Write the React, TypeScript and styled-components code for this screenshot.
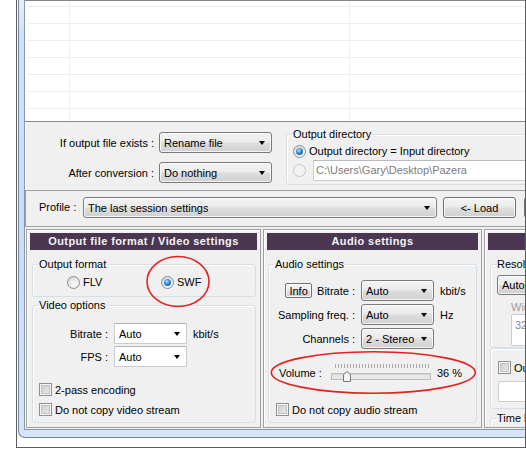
import React from 'react';
import styled, { createGlobalStyle } from 'styled-components';

const GlobalStyle = createGlobalStyle`
    html, body { margin: 0; padding: 0; background: #fff; }
    body {
        font-family: "Liberation Sans", Tahoma, Arial, sans-serif;
        font-size: 11px;
        color: #000;
    }
    * { box-sizing: border-box; }
`;

/* Data */
const listRows = [6, 17, 17, 17, 17, 17, 17, 12];

export default function App() {
    return (
        <Page>
            <GlobalStyle />
            <Frame>
                <Window>
                    <Client>
                        <List>
                            {listRows.map((h, i) => (
                                <ListRow key={i} $h={h} $last={i === listRows.length - 1}>
                                    <Cell />
                                    <Cell />
                                    <Cell />
                                </ListRow>
                            ))}
                        </List>

                        <OptionsArea>
                            <OptionsGrid>
                                <RightLabel>If output file exists :</RightLabel>
                                <Drop>
                                    <DropText>Rename file</DropText>
                                    <Arrow />
                                </Drop>
                                <RightLabel>After conversion :</RightLabel>
                                <Drop>
                                    <DropText>Do nothing</DropText>
                                    <Arrow />
                                </Drop>
                            </OptionsGrid>

                            <DirGroup>
                                <Legend>Output directory</Legend>
                                <DirRow>
                                    <RadioMark $checked />
                                    <span>Output directory = Input directory</span>
                                </DirRow>
                                <DirRow>
                                    <RadioMark $disabled />
                                    <PathInput>C:\Users\Gary\Desktop\Pazera</PathInput>
                                </DirRow>
                            </DirGroup>
                        </OptionsArea>

                        <ProfileBar>
                            <ProfileLabel>Profile :</ProfileLabel>
                            <Drop $w={354}>
                                <DropText>The last session settings</DropText>
                                <Arrow />
                            </Drop>
                            <Button $w={73}>&lt;- Load</Button>
                            <Button $w={73} />
                        </ProfileBar>

                        <PanelsRow>
                            <Panel $w={235}>
                                <PanelHeader>Output file format / Video settings</PanelHeader>
                                <Group $mt={8} $ml={2} $pad="4px 6px 7px">
                                    <Legend>Output format</Legend>
                                    <FormatRow>
                                        <Choice>
                                            <RadioMark />
                                            <span>FLV</span>
                                        </Choice>
                                        <Choice>
                                            <RadioMark $checked />
                                            <span>SWF</span>
                                        </Choice>
                                    </FormatRow>
                                </Group>
                                <Group $mt={2} $ml={2} $pad="11px 6px 6px">
                                    <Legend>Video options</Legend>
                                    <FieldGrid $label={69} $gap={6}>
                                        <RightLabel>Bitrate :</RightLabel>
                                        <Drop $w={73} $edit>
                                            <DropText>Auto</DropText>
                                            <Arrow />
                                        </Drop>
                                        <Unit>kbit/s</Unit>
                                        <RightLabel>FPS :</RightLabel>
                                        <Drop $w={73} $edit>
                                            <DropText>Auto</DropText>
                                            <Arrow />
                                        </Drop>
                                        <span />
                                    </FieldGrid>
                                    <CheckList $mt={16}>
                                        <Choice>
                                            <CheckMark />
                                            <span>2-pass encoding</span>
                                        </Choice>
                                        <Choice>
                                            <CheckMark />
                                            <span>Do not copy video stream</span>
                                        </Choice>
                                    </CheckList>
                                </Group>
                            </Panel>

                            <Panel $w={219}>
                                <PanelHeader>Audio settings</PanelHeader>
                                <Group $mt={8} $ml={1} $pad="9px 6px 6px">
                                    <Legend>Audio settings</Legend>
                                    <FieldGrid $label={80} $gap={6} $rowGap={3}>
                                        <LabelCell>
                                            <SmallButton>Info</SmallButton>
                                            <span>Bitrate :</span>
                                        </LabelCell>
                                        <Drop $w={73}>
                                            <DropText>Auto</DropText>
                                            <Arrow />
                                        </Drop>
                                        <Unit>kbit/s</Unit>
                                        <RightLabel>Sampling freq. :</RightLabel>
                                        <Drop $w={73}>
                                            <DropText>Auto</DropText>
                                            <Arrow />
                                        </Drop>
                                        <Unit>Hz</Unit>
                                        <RightLabel>Channels :</RightLabel>
                                        <Drop $w={73}>
                                            <DropText>2 - Stereo</DropText>
                                            <Arrow />
                                        </Drop>
                                        <span />
                                    </FieldGrid>
                                    <VolumeRow>
                                        <VolumeLabel>Volume :</VolumeLabel>
                                        <Slider>
                                            <Ticks />
                                            <Track />
                                            <Thumb style={{ left: 12 }} viewBox="0 0 8 11" width="8" height="11">
                                                <path
                                                    d="M0.5 3.5 L4 0.5 L7.5 3.5 L7.5 10.5 L0.5 10.5 Z"
                                                    fill="#ececec"
                                                    stroke="#7a7a7a"
                                                />
                                                <path d="M1.5 4 L4 1.8 L6.5 4 L6.5 9.5 L1.5 9.5 Z" fill="#f8f8f8" />
                                            </Thumb>
                                        </Slider>
                                        <VolumeValue>36 %</VolumeValue>
                                    </VolumeRow>
                                    <CheckList $mt={17} $ml={1}>
                                        <Choice>
                                            <CheckMark />
                                            <span>Do not copy audio stream</span>
                                        </Choice>
                                    </CheckList>
                                </Group>
                            </Panel>

                            <Panel $w={200}>
                                <PanelHeader />
                                <Group $mt={8} $ml={2} $pad="4px 6px 1px">
                                    <Legend>Resolution</Legend>
                                    <Drop $w={80} $h={20}>
                                        <DropText>Auto</DropText>
                                        <Arrow />
                                    </Drop>
                                    <SubField>
                                        <Disabled>Width</Disabled>
                                        <SizeInput>320</SizeInput>
                                    </SubField>
                                </Group>
                                <Group $mt={0} $ml={2} $pad="12px 7px 6px">
                                    <Choice>
                                        <CheckMark />
                                        <span>Output</span>
                                    </Choice>
                                    <BlankInput />
                                </Group>
                                <Group $mt={3} $ml={2} $pad="4px 6px 6px">
                                    <Legend>Time limit</Legend>
                                </Group>
                            </Panel>
                        </PanelsRow>
                    </Client>
                </Window>
            </Frame>

            <Marks viewBox="0 0 526 451" width="526" height="451">
                <ellipse cx="178" cy="281.5" rx="31" ry="25" fill="none" stroke="#e3231f" strokeWidth="1.6" />
                <ellipse cx="373.3" cy="372.5" rx="102" ry="20.7" fill="none" stroke="#e3231f" strokeWidth="1.6" />
            </Marks>
        </Page>
    );
}

/* Styles */
const Page = styled.div`
    position: relative;
    width: 526px;
    height: 451px;
    overflow: hidden;
    padding-left: 16px;
    background: #fff;
`;
const Frame = styled.div`
    width: 510px;
    height: 448px;
    border: 1px solid #5d5d5d;
    border-top: none;
    overflow: hidden;
    padding-left: 1px;
`;
const Window = styled.div`
    width: 640px;
    height: 438px;
    border-left: 1px solid #72849b;
    border-bottom: 1px solid #72849b;
    border-bottom-left-radius: 7px;
    background: linear-gradient(to bottom, #e6eefa 0, #cfe1f7 8%, #c9dcf4 60%, #d6e5f8 100%);
    padding: 0 0 7px 5px;
`;
const Client = styled.div`
    height: 100%;
    border-left: 1px solid #8896a8;
    border-bottom: 1px solid #8896a8;
    background: #f0f0f0;
    box-shadow: inset 1px 0 0 #fff;
    display: flex;
    flex-direction: column;
`;
const List = styled.div`
    flex: none;
    height: 122px;
    background: #fff;
    border-top: 1px solid #828790;
    border-bottom: 1px solid #828790;
    padding-left: 2px;
    overflow: hidden;
`;
const ListRow = styled.div<{ $h: number; $last?: boolean }>`
    display: grid;
    grid-template-columns: 43px 280px 1fr;
    height: ${(p) => p.$h}px;
    border-bottom: ${(p) => (p.$last ? 'none' : '1px solid #efefef')};
`;
const Cell = styled.div`
    border-right: 1px solid #efefef;
`;

const OptionsArea = styled.div`
    flex: none;
    height: 68px;
    display: flex;
    align-items: flex-start;
    padding-left: 1px;
`;
const OptionsGrid = styled.div`
    display: grid;
    grid-template-columns: 128px 113px;
    grid-auto-rows: 21px;
    column-gap: 5px;
    row-gap: 9px;
    padding-top: 10px;
    align-items: center;
`;
const RightLabel = styled.span`
    text-align: right;
    white-space: nowrap;
`;
const Legend = styled.legend`
    padding: 0 1px;
    margin-left: -1px;
    line-height: 13px;
    font-size: 11px;
    white-space: nowrap;
`;
const DirGroup = styled.fieldset`
    margin: 6px 0 0 14px;
    width: 300px;
    min-width: 0;
    border: 1px solid #d5dfe5;
    border-radius: 3px;
    box-shadow: inset 1px 1px 0 #fff;
    padding: 2px 6px 3px;
    display: flex;
    flex-direction: column;
    gap: 1px;
`;
const DirRow = styled.div`
    display: flex;
    align-items: center;
    gap: 3px;
    min-height: 16px;
    &:last-child {
        gap: 7px;
        height: 21px;
    }
`;
const PathInput = styled.div`
    width: 240px;
    height: 21px;
    line-height: 19px;
    border: 1px solid #c8cdd3;
    border-top-color: #b7bcc2;
    background: #fff;
    color: #7c7c7c;
    padding-left: 2px;
    white-space: nowrap;
`;

const Drop = styled.div<{ $w?: number; $h?: number; $edit?: boolean }>`
    width: ${(p) => p.$w ?? 113}px;
    height: ${(p) => p.$h ?? 21}px;
    flex: none;
    display: flex;
    align-items: center;
    justify-content: space-between;
    padding: 0 6px 0 4px;
    border: 1px solid ${(p) => (p.$edit ? '#c9ccd2' : '#7a7a7a')};
    border-top-color: ${(p) => (p.$edit ? '#aeb1b8' : '#7a7a7a')};
    border-radius: ${(p) => (p.$edit ? '1px' : '3px')};
    background: ${(p) =>
        p.$edit
            ? '#fff'
            : 'linear-gradient(to bottom, #f3f3f3 0%, #ebebeb 48%, #dddddd 52%, #d0d0d0 100%)'};
    box-shadow: ${(p) => (p.$edit ? 'none' : 'inset 0 0 0 1px rgba(255,255,255,0.75)')};
`;
const DropText = styled.span`
    white-space: nowrap;
    overflow: hidden;
`;
const Arrow = styled.span`
    flex: none;
    width: 0;
    height: 0;
    border-left: 3.5px solid transparent;
    border-right: 3.5px solid transparent;
    border-top: 4px solid #000;
    margin-top: 1px;
`;
const Button = styled.div<{ $w: number }>`
    width: ${(p) => p.$w}px;
    height: 21px;
    flex: none;
    display: flex;
    align-items: center;
    justify-content: center;
    border: 1px solid #707070;
    border-radius: 3px;
    background: linear-gradient(to bottom, #f3f3f3 0%, #ebebeb 48%, #dddddd 52%, #d0d0d0 100%);
    box-shadow: inset 0 0 0 1px rgba(255, 255, 255, 0.75);
    white-space: nowrap;
`;
const SmallButton = styled.div`
    width: 27px;
    height: 15px;
    display: flex;
    align-items: center;
    justify-content: center;
    border: 1px solid #707070;
    border-radius: 2px;
    background: linear-gradient(to bottom, #f3f3f3 0%, #ebebeb 48%, #dddddd 52%, #d0d0d0 100%);
    box-shadow: inset 0 0 0 1px rgba(255, 255, 255, 0.75);
`;

const ProfileBar = styled.div`
    flex: none;
    height: 37px;
    border-top: 1px solid #a0a0a0;
    border-bottom: 1px solid #a0a0a0;
    border-left: 1px solid #a0a0a0;
    display: flex;
    align-items: flex-start;
    padding: 6px 0 0 13px;
    & > ${Button} {
        margin-left: 6px;
    }
    & > ${Button}:last-child {
        margin-left: 8px;
    }
`;
const ProfileLabel = styled.span`
    width: 44px;
    line-height: 21px;
`;

const PanelsRow = styled.div`
    flex: none;
    display: flex;
    gap: 2px;
    margin-top: 2px;
    padding-left: 1px;
    height: 199px;
`;
const Panel = styled.section<{ $w: number }>`
    width: ${(p) => p.$w}px;
    flex: none;
    height: 100%;
    border: 1px solid #a0a0a0;
    box-shadow: inset 1px 1px 0 #fff;
    padding: 3px;
    display: flex;
    flex-direction: column;
    overflow: hidden;
`;
const PanelHeader = styled.h2`
    margin: 0;
    height: 17px;
    flex: none;
    background: #4a3650;
    color: #f3f3f3;
    font-size: 11px;
    font-weight: bold;
    letter-spacing: 0.4px;
    line-height: 17px;
    text-align: center;
    white-space: nowrap;
`;
const Group = styled.fieldset<{ $mt: number; $ml: number; $pad: string }>`
    margin: ${(p) => p.$mt}px 1px 0 ${(p) => p.$ml}px;
    min-width: 0;
    flex: none;
    border: 1px solid #d5dfe5;
    border-radius: 3px;
    box-shadow: inset 1px 1px 0 #fff;
    padding: ${(p) => p.$pad};
`;
const FormatRow = styled.div`
    display: grid;
    grid-template-columns: 94px auto;
    padding-left: 28px;
    height: 14px;
    align-items: center;
`;
const Choice = styled.label`
    display: flex;
    align-items: center;
    gap: 3px;
    height: 13px;
    white-space: nowrap;
`;
const RadioMark = styled.span<{ $checked?: boolean; $disabled?: boolean }>`
    width: 13px;
    height: 13px;
    flex: none;
    border-radius: 50%;
    border: 1px solid ${(p) => (p.$disabled ? '#c6c6c6' : '#8e8f8f')};
    background: ${(p) =>
        p.$disabled
            ? '#f2f2f2'
            : 'radial-gradient(circle at 65% 70%, #fbfbfb 0, #e6e6e6 55%, #cfcfcf 100%)'};
    display: grid;
    place-items: center;
    &::after {
        content: '';
        display: ${(p) => (p.$checked ? 'block' : 'none')};
        width: 7px;
        height: 7px;
        border-radius: 50%;
        background: radial-gradient(circle at 40% 35%, #b5e6ff 0, #3a94d6 40%, #0b3f78 100%);
    }
`;
const CheckMark = styled.span`
    width: 13px;
    height: 13px;
    flex: none;
    border: 1px solid #8e8f8f;
    background: linear-gradient(135deg, #c8c8c8 0%, #eeeeee 100%);
    box-shadow: inset 0 0 0 1px #f7f7f7, inset 0 0 0 2px #c2c2c2;
`;
const FieldGrid = styled.div<{ $label: number; $gap: number; $rowGap?: number }>`
    display: grid;
    grid-template-columns: ${(p) => p.$label}px 73px auto;
    grid-auto-rows: 21px;
    column-gap: ${(p) => p.$gap}px;
    row-gap: ${(p) => p.$rowGap ?? 2}px;
    align-items: center;
`;
const LabelCell = styled.div`
    display: flex;
    justify-content: flex-end;
    align-items: center;
    gap: 5px;
    white-space: nowrap;
`;
const Unit = styled.span`
    white-space: nowrap;
`;
const CheckList = styled.div<{ $mt: number; $ml?: number }>`
    display: flex;
    flex-direction: column;
    gap: 7px;
    margin-top: ${(p) => p.$mt}px;
    margin-left: ${(p) => p.$ml ?? 0}px;
`;
const VolumeRow = styled.div`
    display: flex;
    align-items: center;
    height: 26px;
    margin-top: 11px;
    padding-left: 4px;
`;
const VolumeLabel = styled.span`
    width: 52px;
    flex: none;
`;
const Slider = styled.div`
    position: relative;
    width: 100px;
    height: 20px;
    flex: none;
    display: flex;
    flex-direction: column;
`;
const Ticks = styled.div`
    height: 4px;
    margin: 1px 2px 0 4px;
    background: repeating-linear-gradient(to right, #a9a9a9 0 1px, transparent 1px 3px);
`;
const Track = styled.div`
    height: 7px;
    margin-top: 5px;
    border: 1px solid #bdbdbd;
    background: #e7e7e7;
    box-shadow: inset 0 1px 0 #d6d6d6;
`;
const Thumb = styled.svg`
    position: absolute;
    top: 8px;
    display: block;
`;
const VolumeValue = styled.span`
    margin-left: 6px;
    white-space: nowrap;
`;
const SubField = styled.div`
    display: flex;
    flex-direction: column;
    gap: 1px;
    margin: 6px 0 0 14px;
`;
const Disabled = styled.span`
    color: #a0a0a0;
    line-height: 12px;
`;
const SizeInput = styled.div`
    width: 60px;
    height: 32px;
    border: 1px solid #c9ccd2;
    border-radius: 2px;
    background: #fff;
    color: #8a8a8a;
    padding: 4px 0 0 3px;
`;
const BlankInput = styled.div`
    width: 90px;
    height: 21px;
    margin-top: 7px;
    border: 1px solid #c9ccd2;
    border-radius: 2px;
    background: #fff;
`;
const Marks = styled.svg`
    position: absolute;
    left: 0;
    top: 0;
    pointer-events: none;
`;
